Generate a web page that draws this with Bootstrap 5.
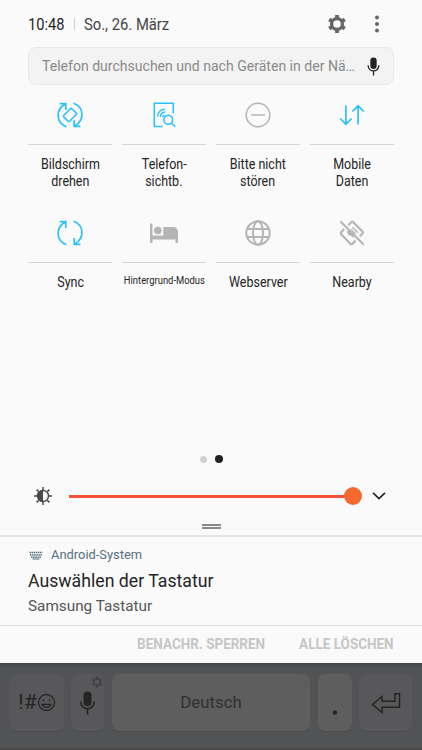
<!DOCTYPE html>
<html lang="de">
<head>
<meta charset="utf-8">
<meta name="viewport" content="width=device-width, initial-scale=1">
<title>Schnelleinstellungen</title>
<link href="https://cdn.jsdelivr.net/npm/bootstrap@5.3.0/dist/css/bootstrap.min.css" rel="stylesheet">
<style>
body{width:422px;height:750px;overflow:hidden;background:#fafafa;color:#252525;font-family:Roboto,"Liberation Sans",sans-serif}
svg{display:block;flex:none}
.cond{display:inline-block;white-space:nowrap;transform:scaleX(.87)}
.from-left{transform-origin:left center}
.from-right{transform-origin:right center}
.topbar{height:47px;padding:0 28px;font-size:17px;line-height:20px}
.clock{width:46px}
.clock .cond{transform:scaleX(.86)}
.divider{width:1px;height:12px;background:#cfcfcf}
.day{color:#444;margin-left:9px}
.settings{color:#666;margin-right:26px}
.menu-dots{margin-right:13px}
.search{height:38px;margin:0 28px;padding:1px 13px 0;background:#f3f3f3;border:1px solid #e8e8e8;border-radius:8px;font-size:14.05px;color:#8a8a8a}
.tiles{margin:0 28px;display:grid;grid-template-columns:repeat(4,84.4px);justify-content:space-between;grid-template-rows:118px 118px}
.tile-icon{height:60px;border-bottom:1px solid #d6d6d6}
.tile-label{font-size:14.6px;line-height:17px;padding-top:11px}
.tile-label .cond{transform:scaleX(.855)}
.tiny-label{font-size:11px;line-height:13px;margin:0 -10px}
.on{color:#2ec1f9}.off{color:#b5b5b5}
.pager{height:8px;margin-top:134px}
.dot{width:7px;height:7px;border-radius:50%;background:#d0d0d0}
.dot.current{width:8px;height:8px;background:#222}
.slider-row{height:54px;padding:12px 35px 0 33px}
.rail{height:3px;background:#f4523a;width:285px}
.thumb{width:18px;height:18px;border-radius:50%;background:#f26a30;margin-left:-10px}
.grip-row{height:18px;padding-top:7px}
.grip{width:19px;height:5px;border-top:2px solid #8c898c;border-bottom:2px solid #8c898c}
.notice{border-top:2px solid #e4e4e4;height:90px;padding:8px 28px 0}
.app{font-size:12.9px;line-height:20px;color:#557180}
.headline{font-size:17.7px;line-height:24px;margin-top:4px}
.detail{font-size:15.3px;line-height:20px;color:#555;margin-top:3px}
.actions{height:38px;border-top:1px solid #dcdcdc;padding:0 28px;font-size:15.5px;font-weight:700;color:#c6c6c6}
.clear-all{margin-left:20px}
.keyboard{height:87px;background:linear-gradient(#444 0,#4f5152 4px,#525354 6px);padding:11px 10px 0;border-bottom:2px solid #4a494a}
.key{height:57px;border-radius:7px;background:#58585a;color:#242424;box-shadow:0 1px 0 #4b4b4c}
.key.bright{background:#5e5e5e}
.symbols{width:54px;font-size:21px}
.voice{width:33px;margin-left:7px}
.space{width:198px;margin-left:8px;font-size:16.8px;color:#303030}
.period{width:34px;margin-left:8px}
.enter{width:53px;margin-left:7px}
.key-badge{position:absolute;top:2px;right:1px;color:#444}
</style>
</head>
<body>
<svg width="0" height="0" class="position-absolute">
<defs>
<symbol id="gear" viewBox="0 0 24 24"><g fill="none" stroke="currentColor"><circle cx="12" cy="12" r="6.500" stroke-width="4"/><path d="M12 1.200v4M12 18.800v4M2.600 6.600l3.500 2M17.900 15.400l3.500 2M2.600 17.400l3.500-2M17.900 8.600l3.500-2" stroke-width="4.600"/></g></symbol>
<symbol id="mic" viewBox="0 0 16 24"><rect x="4" y="0.500" width="8" height="14.500" rx="4" fill="currentColor"/><path d="M1.200 10.500c0 9.500 13.600 9.500 13.600 0M8 18v5.500" fill="none" stroke="currentColor" stroke-width="1.600"/></symbol>
<symbol id="cycle" viewBox="0 0 28 28"><g fill="none" stroke="currentColor" stroke-width="1.700"><path d="M10.500 25.700C-.2 22 -.8 8.500 9.300 3M3.600 2.700h6.200v6.200"/><path d="M17.500 2.300c10.700 3.700 11.300 17.200 1.200 22.700M24.400 25.300h-6.200v-6.200"/></g></symbol>
</defs>
</svg>

<header class="topbar d-flex align-items-center">
  <div class="clock"><span class="cond from-left">10:48</span></div>
  <div class="divider"></div>
  <div class="day me-auto"><span class="cond from-left">So., 26. März</span></div>
  <svg width="20" height="20" class="settings"><use href="#gear"/></svg>
  <svg class="menu-dots" width="8" height="20" fill="#666"><circle cx="4" cy="3.500" r="2"/><circle cx="4" cy="10" r="2"/><circle cx="4" cy="16.500" r="2"/></svg>
</header>

<div class="search d-flex align-items-center justify-content-between">
  <span class="text-nowrap">Telefon durchsuchen und nach Geräten in der Nä…</span>
  <svg width="13" height="19" style="color:#222"><use href="#mic"/></svg>
</div>

<main class="tiles text-center">
  <div><div class="tile-icon on d-flex align-items-center justify-content-center"><svg width="28" height="28"><use href="#cycle"/><rect x="9.900" y="8.200" width="8.200" height="11.600" rx="1" transform="rotate(45 14 14)" fill="none" stroke="currentColor" stroke-width="1.600"/></svg></div><div class="tile-label"><span class="cond">Bildschirm</span><br><span class="cond">drehen</span></div></div>
  <div><div class="tile-icon on d-flex align-items-center justify-content-center"><svg width="28" height="28" fill="none" stroke="currentColor" stroke-width="1.600"><path d="M12.500 25.500H4.300V2.300h19v10"/><circle cx="18.300" cy="18.800" r="4.400"/><path d="M21.500 22l3.800 3.600"/><path d="M7.700 15.500c.3-4.500 3-7 7.300-7.200M10.200 16c.3-3 2-4.800 5-5M12.600 16.200c.2-1.300.7-2 1.700-2.400" stroke-width="1.400"/></svg></div><div class="tile-label"><span class="cond">Telefon-</span><br><span class="cond">sichtb.</span></div></div>
  <div><div class="tile-icon off d-flex align-items-center justify-content-center"><svg width="28" height="28" fill="none" stroke="currentColor" stroke-width="1.500"><circle cx="14" cy="14" r="11.800"/><path d="M7 14h14"/></svg></div><div class="tile-label"><span class="cond">Bitte nicht</span><br><span class="cond">stören</span></div></div>
  <div><div class="tile-icon on d-flex align-items-center justify-content-center"><svg width="28" height="28" fill="none" stroke="currentColor" stroke-width="1.700"><path d="M7.900 4.500V23M2.200 17.500L7.900 23.200l5.700-5.700M20.100 23.500V5M14.400 10.500l5.700-5.700 5.700 5.700"/></svg></div><div class="tile-label"><span class="cond">Mobile</span><br><span class="cond">Daten</span></div></div>

  <div><div class="tile-icon on d-flex align-items-center justify-content-center"><svg width="28" height="28"><use href="#cycle"/></svg></div><div class="tile-label"><span class="cond">Sync</span></div></div>
  <div><div class="tile-icon off d-flex align-items-center justify-content-center"><svg width="28" height="28" fill="currentColor"><path d="M0 4.500h2.500v12h10.800V8h9c3.500 0 5.700 2 5.700 5v11h-2.500v-3.500h-23V24H0z"/><circle cx="7.800" cy="11.500" r="3.800"/></svg></div><div class="tile-label tiny-label"><span class="cond">Hintergrund-Modus</span></div></div>
  <div><div class="tile-icon off d-flex align-items-center justify-content-center"><svg width="28" height="28" fill="none" stroke="currentColor" stroke-width="2"><circle cx="14" cy="14" r="11.700"/><ellipse cx="14" cy="14" rx="5" ry="11.700"/><path d="M3 10h22M3 18h22"/></svg></div><div class="tile-label"><span class="cond">Webserver</span></div></div>
  <div><div class="tile-icon off d-flex align-items-center justify-content-center"><svg width="28" height="28" fill="none" stroke="currentColor" stroke-width="2.200" stroke-linejoin="round"><path d="M10.200 6.200l3-3a1.500 1.500 0 0 1 2.100 0l9.200 9.300a1.500 1.500 0 0 1 0 2.100l-2.600 2.600"/><path d="M6.300 10l-3.200 3.200a1.500 1.500 0 0 0 0 2.100l9.300 9.400a1.500 1.500 0 0 0 2.100 0l3.100-3.100"/><path d="M2.300 2.300l23.500 23.500" stroke-width="2"/><path d="M14.500 8.300l5.500 5.500M13 10.300l4.500 4.500" stroke-width="1.300"/><path d="M8.500 12.300l2.500-.8 5.500 5.500-1.500 1.500-2.500-2-2-.2z" fill="currentColor" stroke="none"/></svg></div><div class="tile-label"><span class="cond">Nearby</span></div></div>
</main>

<div class="pager d-flex align-items-center justify-content-center gap-2"><span class="dot"></span><span class="dot current"></span></div>

<div class="slider-row d-flex align-items-center">
  <svg width="20" height="20" viewBox="0 0 20 20" stroke="#4a4a4a" fill="none"><circle cx="10" cy="10" r="5.500" stroke-width="1.400"/><path d="M10 4a6 6 0 0 0 0 12z" fill="#4a4a4a" stroke="none"/><path stroke-width="1.500" d="M10 1v3M10 16v3M1 10h3M16 10h3M3.600 3.600l2 2M14.400 14.400l2 2M3.600 16.400l2-2M14.400 5.600l2-2"/></svg>
  <div class="rail ms-3"></div><div class="thumb"></div>
  <svg class="ms-auto" width="16" height="10" fill="none" stroke="#222" stroke-width="1.600"><path d="M2 1.800l6 5.800 6-5.800"/></svg>
</div>
<div class="grip-row d-flex justify-content-center align-items-start"><div class="grip"></div></div>

<section class="notice">
  <div class="app d-flex align-items-center"><svg width="15" height="9" stroke="currentColor" fill="none" stroke-width="1.500"><path d="M1.500 1.500h13M2 4h12" stroke-dasharray="1.500 .6"/><path d="M3 6.300h10" stroke-dasharray="1.500 .6"/><path d="M4.500 8h7" stroke-width="1"/></svg><span class="ms-2">Android-System</span></div>
  <div class="headline">Auswählen der Tastatur</div>
  <div class="detail">Samsung Tastatur</div>
</section>
<div class="actions d-flex align-items-center justify-content-end"><span class="cond from-right">BENACHR. SPERREN</span><span class="cond from-right clear-all">ALLE LÖSCHEN</span></div>

<footer class="keyboard d-flex align-items-start">
  <div class="key symbols d-flex align-items-center justify-content-center"><span>!#</span><svg width="19" height="19" fill="none" stroke="currentColor" stroke-width="1.300"><circle cx="9.500" cy="9.500" r="8"/><path d="M5 11.300c2 4 7 4 9 0z"/><path d="M5.700 7.300h1.500M11.800 7.300h1.500" stroke-width="1.700"/></svg></div>
  <div class="key voice position-relative d-flex align-items-center justify-content-center"><svg width="17" height="24"><use href="#mic"/></svg><svg class="key-badge" width="12" height="12"><use href="#gear"/></svg></div>
  <div class="key bright space d-flex align-items-center justify-content-center">Deutsch</div>
  <div class="key bright period d-flex align-items-center justify-content-center"><svg width="6" height="24" fill="currentColor"><circle cx="3" cy="21.500" r="2.200"/></svg></div>
  <div class="key enter d-flex align-items-center justify-content-center"><svg width="30" height="22" fill="none" stroke="currentColor" stroke-width="1.500"><path d="M1.500 12.500L11 4.500v4.800h13V1.800h4.500v13.400H11v5.300z"/></svg></div>
</footer>
<script src="https://cdn.jsdelivr.net/npm/bootstrap@5.3.0/dist/js/bootstrap.bundle.min.js"></script>
</body>
</html>
